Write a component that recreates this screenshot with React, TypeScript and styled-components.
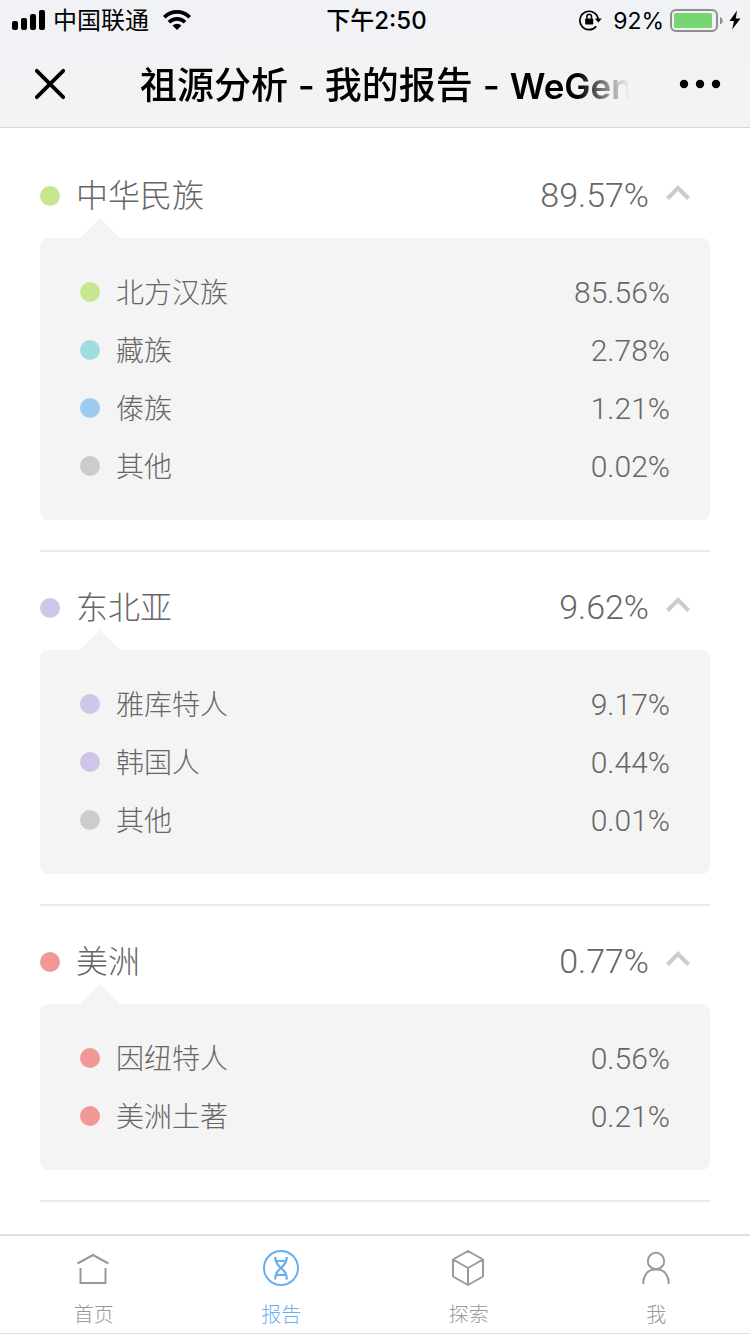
import React, { useState } from "react";
import styled, { createGlobalStyle } from "styled-components";

const GlobalStyle = createGlobalStyle`
  *, *::before, *::after { box-sizing: border-box; }
  body {
    margin: 0;
    background: #fff;
    color: #666;
    font-family: Inter, "Noto Sans CJK SC", sans-serif;
  }
  button { font: inherit; color: inherit; background: none; border: 0; padding: 0; cursor: pointer; }
  a { color: inherit; text-decoration: none; }
  svg { display: block; flex: none; }
`;

const Screen = styled.div`
  display: flex;
  flex-direction: column;
  min-height: 100vh;
`;

const TopBar = styled.header`
  position: sticky;
  top: 0;
  z-index: 2;
  background: linear-gradient(175deg, #f1f2f5 30%, #f2f3f3 70%);
  border-bottom: 1px solid #d6d7d8;
  color: #000;
`;

const StatusBar = styled.div`
  display: grid;
  grid-template-columns: 1fr auto 1fr;
  align-items: center;
  height: 40px;
  padding: 0 9px 0 12px;
  font-size: 24px;
  line-height: 36px;
`;

const StatusGroup = styled.div<{ $end?: boolean }>`
  display: flex;
  align-items: center;
  justify-content: ${(p) => (p.$end ? "flex-end" : "flex-start")};
  gap: ${(p) => (p.$end ? "6px" : "8px")};
`;

const StatusText = styled.span`
  padding-top: 2px;
`;

const Carrier = styled(StatusText)`
  margin-right: 6px;
`;

const BatteryLevel = styled(StatusText)`
  margin-left: 5px;
  font-size: 23px;
`;

const Clock = styled.time`
  padding-top: 2px;
  font-weight: 500;
`;

const NavBar = styled.div`
  display: grid;
  grid-template-columns: 140px 1fr 112px;
  align-items: center;
  height: 87px;
`;

const CloseButton = styled.button`
  justify-self: start;
  margin-left: 34px;
`;

const MoreButton = styled.button`
  justify-self: end;
  margin-right: 29px;
`;

const Title = styled.h1`
  margin: 0;
  padding-top: 4px;
  overflow: hidden;
  white-space: nowrap;
  font-size: 37px;
  line-height: 56px;
  font-weight: 500;
  mask-image: linear-gradient(to right, #000 calc(100% - 60px), transparent calc(100% - 9px));
`;

const Brand = styled.span`
  font-size: 35px;
  font-weight: 600;
`;

const Content = styled.main`
  flex: 1;
  padding: 12px 40px 32px;
`;

const Group = styled.section`
  padding-bottom: 30px;
  border-bottom: 2px solid #ebebeb;
`;

const GroupHeading = styled.h2`
  margin: 0;
  font-size: 32px;
  font-weight: 300;
`;

const GroupToggle = styled.button`
  display: flex;
  align-items: center;
  width: 100%;
  height: 98px;
  padding: 14px 20px 0 0;
  text-align: left;
`;

const Dot = styled.span<{ $color: string }>`
  flex: none;
  width: 20px;
  height: 20px;
  border-radius: 50%;
  background: ${(p) => p.$color};
`;

const Name = styled.span`
  flex: 1;
  padding: 0 0 2px 16px;
  font-family: "Noto Sans CJK SC", sans-serif;
  font-weight: 300;
`;

const GroupName = styled(Name)`
  padding-bottom: 6px;
`;

const GroupValue = styled.span`
  margin-right: 17px;
  padding-bottom: 2px;
  font-family: Roboto, sans-serif;
  font-size: 34px;
  font-weight: 300;
`;

const Panel = styled.ul`
  position: relative;
  margin: 0;
  padding: 25px 40px;
  list-style: none;
  border-radius: 8px;
  background: #f4f4f4;

  &::before {
    content: "";
    position: absolute;
    left: 40px;
    bottom: 100%;
    border: 20px solid transparent;
    border-top-width: 0;
    border-bottom-color: #f4f4f4;
  }
`;

const Item = styled.li`
  display: flex;
  align-items: center;
  height: 58px;
  font-size: 28px;
`;

const ItemValue = styled.span`
  font-family: Roboto, sans-serif;
  font-size: 30px;
  font-weight: 300;
`;

const TabBar = styled.nav`
  position: sticky;
  bottom: 0;
  display: grid;
  grid-template-columns: repeat(4, 1fr);
  height: 100px;
  border-top: 2px solid #e0e0e0;
  border-bottom: 1px solid #e0e0e0;
  background: #fff;
`;

const Tab = styled.a<{ $active?: boolean }>`
  display: flex;
  flex-direction: column;
  align-items: center;
  gap: 12px;
  padding-top: 12px;
  color: ${(p) => (p.$active ? "#68aff0" : "#999")};
  font-family: "Noto Sans CJK SC", sans-serif;
  font-size: 20px;
  font-weight: 300;
  line-height: 28px;
`;

const SignalIcon = () => (
  <svg width="33" height="20" viewBox="0 0 33 20" aria-hidden="true">
    <rect x="0" y="11" width="6" height="9" rx="2" />
    <rect x="9" y="8" width="6" height="12" rx="2" />
    <rect x="18" y="4" width="6" height="16" rx="2" />
    <rect x="27" y="0" width="6" height="20" rx="2" />
  </svg>
);

const WifiIcon = () => (
  <svg width="28" height="20" viewBox="0 0 28 20" aria-hidden="true">
    <path d="M1.3 7.2a18 18 0 0 1 25.4 0M6 12.2a11.2 11.2 0 0 1 16 0" fill="none" stroke="#000" strokeWidth="3.7" />
    <path d="M9.5 15.6a6.5 6.5 0 0 1 9 0L14 20z" />
  </svg>
);

const RotationLockIcon = () => (
  <svg width="23" height="22" viewBox="0 0 23 22" aria-hidden="true">
    <path d="M17.2 17.4A9.2 9.2 0 1 1 19.2 10" fill="none" stroke="#000" strokeWidth="1.7" />
    <path d="M15.8 9.6h7l-3.5 4z" />
    <rect x="6.2" y="9.4" width="8" height="6.2" rx="0.8" />
    <path d="M7.9 9.8V7.5a2.3 2.3 0 0 1 4.6 0v2.3" fill="none" stroke="#000" strokeWidth="1.5" />
  </svg>
);

const BatteryIcon = () => (
  <svg width="53" height="24" viewBox="0 0 53 24" aria-hidden="true">
    <rect x="1" y="2" width="46" height="21" rx="5" fill="none" stroke="#8e8e90" strokeWidth="2" />
    <rect x="4" y="5" width="38" height="15" rx="1.5" fill="#76d672" />
    <path d="M50 9c3.6 1.4 3.6 6 0 7.4z" fill="#8e8e90" />
  </svg>
);

const BoltIcon = () => (
  <svg width="12" height="20" viewBox="0 0 12 20" aria-hidden="true">
    <path d="M8 0.5 0.5 11H5L3.2 19.5 11.5 8.4H6.8z" />
  </svg>
);

const CloseIcon = () => (
  <svg width="32" height="32" viewBox="0 0 32 32" aria-hidden="true">
    <path d="M2.8 2.8l26.4 26.4M29.2 2.8 2.8 29.2" stroke="#000" strokeWidth="3.8" strokeLinecap="round" />
  </svg>
);

const MoreIcon = () => (
  <svg width="42" height="10" viewBox="0 0 42 10" aria-hidden="true">
    <circle cx="5" cy="5" r="4.2" />
    <circle cx="21" cy="5" r="4.2" />
    <circle cx="37" cy="5" r="4.2" />
  </svg>
);

const Chevron = ({ open }: { open: boolean }) => (
  <svg width="24" height="22" viewBox="0 0 24 22" aria-hidden="true">
    <path
      d={open ? "M1.5 13.5 12 3l10.5 10.5" : "M1.5 3 12 13.5 22.5 3"}
      fill="none"
      stroke="#ccc"
      strokeWidth="4.2"
    />
  </svg>
);

const HomeIcon = () => (
  <svg width="36" height="40" viewBox="0 0 36 40" fill="none" stroke="currentColor" strokeWidth="2" aria-hidden="true">
    <path d="M1.5 15.5 17 7l15.5 8.5M4.5 20v15h25V20" />
  </svg>
);

const DnaIcon = () => (
  <svg width="40" height="40" viewBox="0 0 40 40" fill="none" stroke="currentColor" strokeWidth="2" aria-hidden="true">
    <circle cx="20" cy="20" r="17" />
    <path d="M14.2 9c0 5.5 2.3 8 5.8 11 3.5 3 5.8 5.5 5.8 11.5M25.8 9c0 5.500-2.300 8-5.800 11-3.500 3-5.800 5.500-5.800 11.500" strokeWidth="2.3" />
    <path d="M15 13h10M16 27h8" strokeWidth="2" />
  </svg>
);

const CubeIcon = () => (
  <svg width="36" height="40" viewBox="0 0 36 40" fill="none" stroke="currentColor" strokeWidth="2" strokeLinejoin="round" aria-hidden="true">
    <path d="M17 3 32 11.5v17L17 37 2 28.5v-17zM2 11.5 17 20l15-8.5M17 20v17" />
  </svg>
);

const PersonIcon = () => (
  <svg width="36" height="40" viewBox="0 0 36 40" fill="none" stroke="currentColor" strokeWidth="2" aria-hidden="true">
    <circle cx="18" cy="13" r="8.2" />
    <path d="M5.3 36c0-9.5 5-14.8 12.7-14.8S30.7 26.5 30.7 36" />
  </svg>
);

type Share = { name: string; value: string; color: string };
type Region = Share & { items: Share[] };

const GREEN = "#c7e78f";
const PURPLE = "#cfc5e8";
const RED = "#f09896";
const GREY = "#ccc";

const regions: Region[] = [
  {
    name: "中华民族",
    value: "89.57%",
    color: GREEN,
    items: [
      { name: "北方汉族", value: "85.56%", color: GREEN },
      { name: "藏族", value: "2.78%", color: "#a0dde0" },
      { name: "傣族", value: "1.21%", color: "#a0cbf0" },
      { name: "其他", value: "0.02%", color: GREY },
    ],
  },
  {
    name: "东北亚",
    value: "9.62%",
    color: PURPLE,
    items: [
      { name: "雅库特人", value: "9.17%", color: PURPLE },
      { name: "韩国人", value: "0.44%", color: PURPLE },
      { name: "其他", value: "0.01%", color: GREY },
    ],
  },
  {
    name: "美洲",
    value: "0.77%",
    color: RED,
    items: [
      { name: "因纽特人", value: "0.56%", color: RED },
      { name: "美洲土著", value: "0.21%", color: RED },
    ],
  },
];

const tabs = [
  { label: "首页", href: "#home", Icon: HomeIcon },
  { label: "报告", href: "#report", Icon: DnaIcon },
  { label: "探索", href: "#explore", Icon: CubeIcon },
  { label: "我", href: "#me", Icon: PersonIcon },
];

function RegionGroup({ region }: { region: Region }) {
  const [open, setOpen] = useState(true);
  return (
    <Group>
      <GroupHeading>
        <GroupToggle type="button" aria-expanded={open} onClick={() => setOpen(!open)}>
          <Dot $color={region.color} />
          <GroupName>{region.name}</GroupName>
          <GroupValue>{region.value}</GroupValue>
          <Chevron open={open} />
        </GroupToggle>
      </GroupHeading>
      {open && (
        <Panel>
          {region.items.map((item) => (
            <Item key={item.name}>
              <Dot $color={item.color} />
              <Name>{item.name}</Name>
              <ItemValue>{item.value}</ItemValue>
            </Item>
          ))}
        </Panel>
      )}
    </Group>
  );
}

export default function App() {
  return (
    <Screen>
      <GlobalStyle />
      <TopBar>
        <StatusBar>
          <StatusGroup>
            <SignalIcon />
            <Carrier>中国联通</Carrier>
            <WifiIcon />
          </StatusGroup>
          <Clock>下午2:50</Clock>
          <StatusGroup $end>
            <RotationLockIcon />
            <BatteryLevel>92%</BatteryLevel>
            <BatteryIcon />
            <BoltIcon />
          </StatusGroup>
        </StatusBar>
        <NavBar>
          <CloseButton type="button" aria-label="关闭">
            <CloseIcon />
          </CloseButton>
          <Title>
            祖源分析 - 我的报告 - <Brand>WeGen</Brand>
          </Title>
          <MoreButton type="button" aria-label="更多">
            <MoreIcon />
          </MoreButton>
        </NavBar>
      </TopBar>
      <Content>
        {regions.map((region) => (
          <RegionGroup key={region.name} region={region} />
        ))}
      </Content>
      <TabBar>
        {tabs.map(({ label, href, Icon }) => (
          <Tab key={href} href={href} $active={href === "#report"} aria-current={href === "#report" ? "page" : undefined}>
            <Icon />
            {label}
          </Tab>
        ))}
      </TabBar>
    </Screen>
  );
}
